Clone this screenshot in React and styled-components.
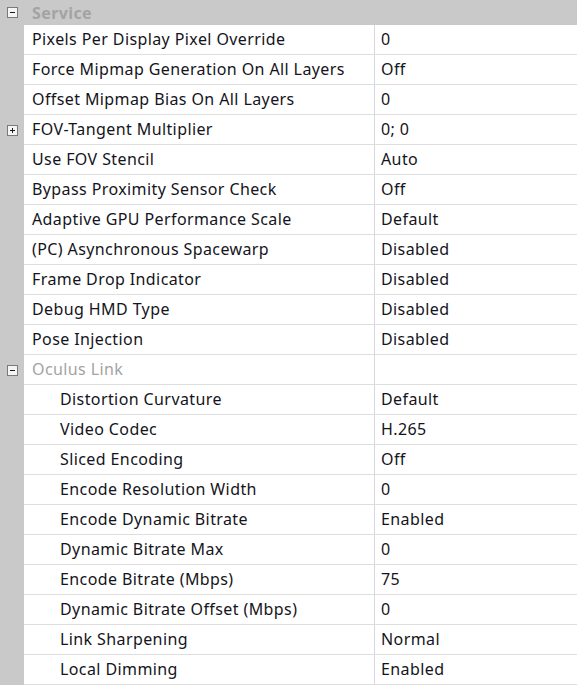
import React from "react";
import styled, { createGlobalStyle } from "styled-components";

const Global = createGlobalStyle`
  html, body { margin: 0; padding: 0; background: #fff; }
  body { font-family: "Noto Sans", "Open Sans", sans-serif; }
`;

const Grid = styled.div`
  width: 577px;
  height: 685px;
  overflow: hidden;
  background: #fff;
  font-size: 16px;
  letter-spacing: 0.4px;
  color: #141420;
`;

const CategoryRow = styled.div`
  display: grid;
  grid-template-columns: 24px 1fr;
  height: 25px;
  background: #c9c9c9;
  align-items: center;
`;

const CategoryLabel = styled.div`
  padding-left: 8px;
  font-weight: 700;
  color: #a3a3a3;
  line-height: 24px;
`;

const Row = styled.div`
  display: grid;
  grid-template-columns: 24px 350px 1px 1fr;
  height: 30px;
`;

const Gutter = styled.div`
  background: #c9c9c9;
  display: flex;
  align-items: center;
  justify-content: center;
`;

const Cell = styled.div`
  border-bottom: 1px solid #dedede;
  display: flex;
  align-items: center;
  white-space: nowrap;
  overflow: hidden;
  padding-left: ${(p) => p.$pad}px;
  padding-bottom: 2px;
  color: ${(p) => (p.$muted ? "#a3a3a3" : "#141420")};
`;

const Divider = styled.div`
  background: #d6d6dc;
  border-bottom: 1px solid #dedede;
`;

const Toggle = styled.span`
  width: 9px;
  height: 9px;
  border: 1px solid #7a7a7a;
  background: #f4f4f4;
  position: relative;
  box-sizing: content-box;
  margin-left: 1px;
  &::before {
    content: "";
    position: absolute;
    left: 2px;
    top: 4px;
    width: 5px;
    height: 1px;
    background: #1a1a1a;
  }
  &::after {
    content: "";
    display: ${(p) => (p.$open ? "none" : "block")};
    position: absolute;
    left: 4px;
    top: 2px;
    width: 1px;
    height: 5px;
    background: #1a1a1a;
  }
`;

const service = [
  ["Pixels Per Display Pixel Override", "0"],
  ["Force Mipmap Generation On All Layers", "Off"],
  ["Offset Mipmap Bias On All Layers", "0"],
  ["FOV-Tangent Multiplier", "0; 0", "closed"],
  ["Use FOV Stencil", "Auto"],
  ["Bypass Proximity Sensor Check", "Off"],
  ["Adaptive GPU Performance Scale", "Default"],
  ["(PC) Asynchronous Spacewarp", "Disabled"],
  ["Frame Drop Indicator", "Disabled"],
  ["Debug HMD Type", "Disabled"],
  ["Pose Injection", "Disabled"],
];

const link = [
  ["Distortion Curvature", "Default"],
  ["Video Codec", "H.265"],
  ["Sliced Encoding", "Off"],
  ["Encode Resolution Width", "0"],
  ["Encode Dynamic Bitrate", "Enabled"],
  ["Dynamic Bitrate Max", "0"],
  ["Encode Bitrate (Mbps)", "75"],
  ["Dynamic Bitrate Offset (Mbps)", "0"],
  ["Link Sharpening", "Normal"],
  ["Local Dimming", "Enabled"],
];

function PropRow({ name, value, toggle, indent, muted }) {
  return (
    <Row>
      <Gutter>{toggle && <Toggle $open={toggle === "open"} />}</Gutter>
      <Cell $pad={indent ? 36 : 8} $muted={muted}>{name}</Cell>
      <Divider />
      <Cell $pad={6}>{value}</Cell>
    </Row>
  );
}

export default function App() {
  return (
    <Grid>
      <Global />
      <CategoryRow>
        <Gutter>
          <Toggle $open />
        </Gutter>
        <CategoryLabel>Service</CategoryLabel>
      </CategoryRow>
      {service.map(([n, v, t]) => (
        <PropRow key={n} name={n} value={v} toggle={t} />
      ))}
      <PropRow name="Oculus Link" value="" toggle="open" muted />
      {link.map(([n, v]) => (
        <PropRow key={n} name={n} value={v} indent />
      ))}
    </Grid>
  );
}
